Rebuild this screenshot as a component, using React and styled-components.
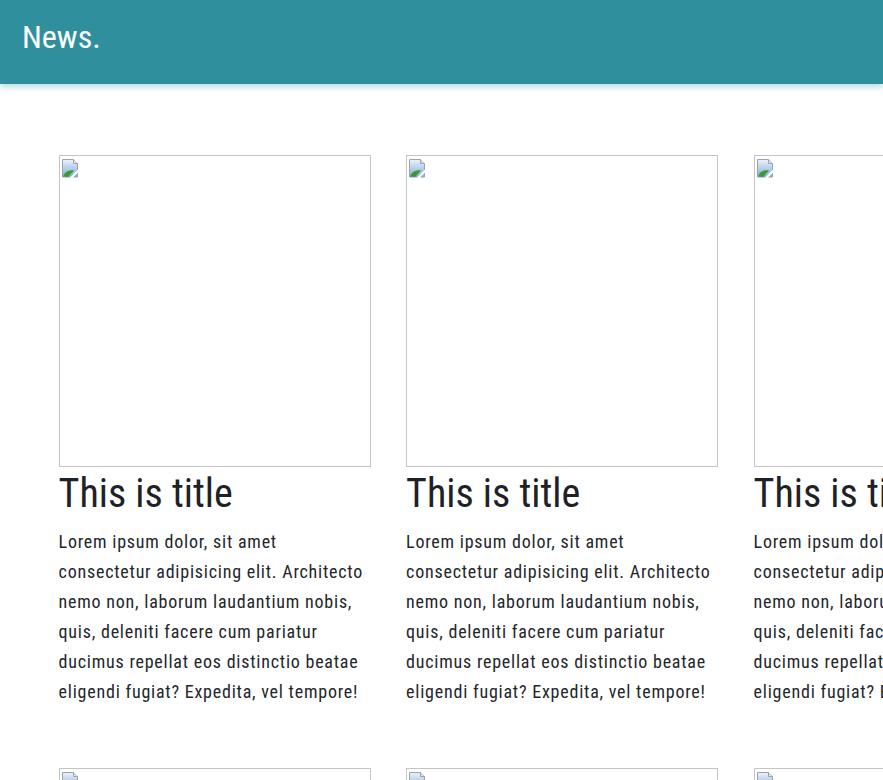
import React from "react";
import styled, { createGlobalStyle } from "styled-components";

const Global = createGlobalStyle`
  html, body { margin: 0; padding: 0; background: #fff; overflow-x: hidden; }
  body { font-family: "Roboto Condensed", Roboto, "Liberation Sans", sans-serif; color: #222; }
`;

const Header = styled.header`
  box-sizing: border-box;
  height: 84px;
  background: #2f8f9d;
  box-shadow: 0 3px 6px rgba(47, 160, 175, 0.35);
  padding: 17px 22px 0;
  position: relative;
  z-index: 1;
`;

const Logo = styled.h1`
  margin: 0;
  color: #fff;
  font-size: 32px;
  line-height: 40px;
  font-weight: 400;
`;

const Grid = styled.main`
  display: grid;
  grid-template-columns: repeat(3, 312px);
  column-gap: 35.5px;
  row-gap: 61px;
  padding: 71px 0 0 58.6px;
  width: max-content;
`;

const Card = styled.article`
  display: flex;
  flex-direction: column;
`;

const ImageBox = styled.div`
  box-sizing: border-box;
  width: 312px;
  height: 312px;
  border: 1px solid #c4c4c4;
  position: relative;
`;

const Broken = styled.svg`
  position: absolute;
  left: 1px;
  top: 3px;
`;

const Title = styled.h2`
  margin: 3px 0 0;
  font-size: 40px;
  line-height: 48px;
  font-weight: 400;
  color: #1e2126;
`;

const Body = styled.p`
  margin: 9px 0 0;
  font-size: 18px;
  line-height: 30px;
  letter-spacing: 0.77px;
  color: #23262b;
`;

const BrokenIcon = () => (
  <Broken width="19" height="19" viewBox="0 0 19 19">
    <defs>
      <linearGradient id="sky" x1="0" y1="0" x2="0" y2="1">
        <stop offset="0" stopColor="#eef3fa" />
        <stop offset="1" stopColor="#7faadb" />
      </linearGradient>
    </defs>
    <path d="M1.5 0.5h11l4 4v13.5h-15z" fill="url(#sky)" stroke="#98a4b3" />
    <path d="M12.5 0.5v4h4" fill="#e0e6ee" stroke="#98a4b3" />
    <path d="M2 17.5c2-5 6-7 11-6l-6 6.5z" fill="#3a9a30" />
    <path d="M10 19l8-8" stroke="#fff" strokeWidth="2.2" />
  </Broken>
);

const text =
  "Lorem ipsum dolor, sit amet consectetur adipisicing elit. Architecto nemo non, laborum laudantium nobis, quis, deleniti facere cum pariatur ducimus repellat eos distinctio beatae eligendi fugiat? Expedita, vel tempore!";

export default function App() {
  const items = Array.from({ length: 6 });
  return (
    <>
      <Global />
      <Header>
        <Logo>News.</Logo>
      </Header>
      <Grid>
        {items.map((_, i) => (
          <Card key={i}>
            <ImageBox>
              <BrokenIcon />
            </ImageBox>
            <Title>This is title</Title>
            <Body>{text}</Body>
          </Card>
        ))}
      </Grid>
    </>
  );
}
